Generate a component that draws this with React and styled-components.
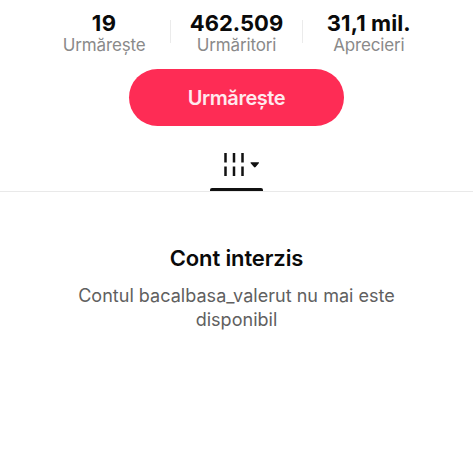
import React from 'react';
import styled, { createGlobalStyle } from 'styled-components';

const GlobalStyle = createGlobalStyle`
  * {
    box-sizing: border-box;
  }

  body {
    margin: 0;
    background-color: #fff;
    font-family: Inter, "Liberation Sans", sans-serif;
  }
`;

const Page = styled.main`
  height: 450px;
  overflow: hidden;
  display: flex;
  flex-direction: column;
  align-items: center;
  background-color: #fff;
`;

const Stats = styled.div`
  display: flex;
  width: 396px;
  height: 69px;
  padding-top: 10px;
`;

const Stat = styled.div`
  flex: 1;
  display: flex;
  flex-direction: column;
  align-items: center;
  white-space: nowrap;
`;

const Value = styled.strong`
  font-size: 22px;
  line-height: 26px;
  font-weight: 700;
  letter-spacing: ${({ $spacing }) => $spacing || '0'};
  color: #0a0a0a;
`;

const Label = styled.span`
  font-size: 17px;
  line-height: 19px;
  letter-spacing: -0.15px;
  color: #8a8a8a;
`;

const Divider = styled.div`
  width: 1px;
  height: 23px;
  margin-top: 10px;
  background-color: #ebebeb;
`;

const FollowButton = styled.button`
  width: 215px;
  height: 57px;
  padding: 0;
  border: none;
  border-radius: 29px;
  background-color: #fe2c55;
  color: #ffe9ee;
  font-family: inherit;
  font-size: 20px;
  font-weight: 600;
  letter-spacing: -0.45px;
`;

const Tabs = styled.nav`
  display: flex;
  justify-content: center;
  width: 100%;
  height: 66px;
  border-bottom: 1px solid #e9e9e9;
`;

const Tab = styled.div`
  display: flex;
  flex-direction: column;
  justify-content: flex-end;
  width: 53px;
  height: 65px;
`;

const TabIcon = styled.svg`
  display: block;
  width: 53px;
  height: 35px;
`;

const Indicator = styled.div`
  height: 3px;
  border-radius: 2px 2px 0 0;
  background-color: #111;
`;

const Notice = styled.section`
  padding-top: 52px;
  text-align: center;
`;

const Title = styled.h1`
  margin: 0;
  font-size: 22px;
  line-height: 28px;
  font-weight: 600;
  letter-spacing: -0.12px;
  color: #0a0a0a;
`;

const Message = styled.p`
  width: 340px;
  margin: 12px 0 0;
  font-size: 18px;
  line-height: 24px;
  letter-spacing: 0.03px;
  color: #606060;
`;

const App = () => (
  <>
    <GlobalStyle />
    <Page>
      <Stats>
        <Stat>
          <Value $spacing="0.5px">19</Value>
          <Label>Urmărește</Label>
        </Stat>
        <Divider />
        <Stat>
          <Value>462.509</Value>
          <Label>Urmăritori</Label>
        </Stat>
        <Divider />
        <Stat>
          <Value $spacing="0.1px">31,1 mil.</Value>
          <Label>Aprecieri</Label>
        </Stat>
      </Stats>
      <FollowButton>Urmărește</FollowButton>
      <Tabs>
        <Tab>
          <TabIcon viewBox="0 0 53 35" aria-hidden="true">
            <path
              d="M15.5 0v9.5M24 0v9.5M32.5 0v9.5M15.5 13.5V23M24 13.5V23M32.5 13.5V23"
              stroke="#111"
              strokeWidth="2.5"
            />
            <path d="M41 9.2h7.5q1 .2.3 1L45.6 14q-.8.8-1.6 0l-3.3-3.8q-.6-.8.3-1z" fill="#111" />
          </TabIcon>
          <Indicator />
        </Tab>
      </Tabs>
      <Notice>
        <Title>Cont interzis</Title>
        <Message>Contul bacalbasa_valerut nu mai este disponibil</Message>
      </Notice>
    </Page>
  </>
);

export default App;
